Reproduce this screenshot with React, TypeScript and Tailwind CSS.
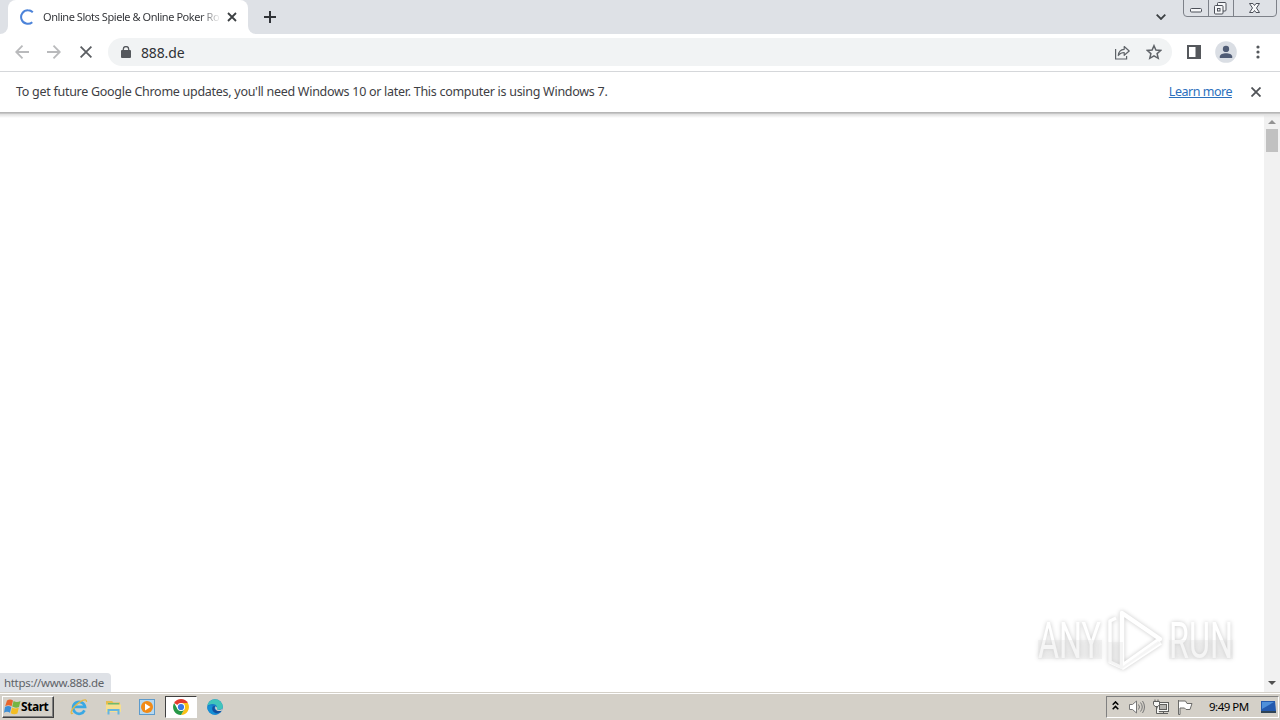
import React from 'react';
import type { ReactNode } from 'react';

const TabStrip: React.FC = () => (
  <header className="relative flex h-[34px] shrink-0 bg-[#dee1e6]">
    {/* Active tab */}
    <div className="h-full w-2 bg-white">
      <div className="h-full w-2 rounded-br-lg bg-[#dee1e6]"></div>
    </div>
    <div className="flex h-full w-60 items-center rounded-t-lg bg-white pl-3 pr-2.5">
      <svg className="h-4 w-4 shrink-0" viewBox="0 0 16 16" fill="none">
        <path d="M8 1.2A6.8 6.8 0 1 0 12.3 13.2M8 1.2A6.8 6.8 0 0 1 12.8 3.2" stroke="#4c83d9" strokeWidth="2" />
      </svg>
      <span className="ml-[7px] w-[178px] whitespace-nowrap bg-linear-to-r from-[#303236] from-88% to-transparent bg-clip-text text-[11px] leading-4 tracking-[-0.44px] text-transparent">
        Online Slots Spiele &amp; Online Poker Ro
      </span>
      <svg className="ml-[6px] h-2.5 w-2.5 shrink-0" viewBox="0 0 10 10" stroke="#3c4043" strokeWidth="1.8">
        <path d="M1 1l8 8M9 1l-8 8" />
      </svg>
    </div>
    <div className="h-full w-2 bg-white">
      <div className="h-full w-2 rounded-bl-lg bg-[#dee1e6]"></div>
    </div>
    <svg className="ml-2 mt-[11px] h-3 w-3" viewBox="0 0 12 12" stroke="#303338" strokeWidth="2">
      <path d="M6 0v12M0 6h12" />
    </svg>
    <svg className="ml-auto mr-[17px] mt-[14px] h-1.5 w-2.5" viewBox="0 0 10 6" fill="none" stroke="#3c4043" strokeWidth="1.8">
      <path d="M.7 .7L5 5l4.300-4.300" />
    </svg>
    {/* Window buttons */}
    <svg className="mr-[3px] h-[18px] w-[94px]" viewBox="0 0 94 18" fill="none" stroke="#7d8189">
      <path d="M.5 0v13q0 3.500 3.500 3.500h86q3.500 0 3.500-3.500V0M25.500 0v16.500M50.500 0v16.500" />
      <rect x="7.500" y="8.500" width="11" height="3.500" rx="1" fill="#f6f7f9" stroke="#4c5059" />
      <g fill="#f6f7f9" stroke="#4c5059">
        <rect x="34.500" y="2.500" width="8.500" height="8.500" rx="1" />
        <rect x="31.500" y="5.500" width="8.500" height="8.500" rx="1" />
        <rect x="34.500" y="8.500" width="2.500" height="2.500" />
        <path d="M66.500 3.500h3.500l1.500 2 1.500-2h3.500l-3 4.500 3 4.500H73l-1.500-2-1.500 2h-3.500l3-4.500z" />
      </g>
    </svg>
  </header>
);

const Toolbar: React.FC = () => (
  <div className="flex h-[38px] shrink-0 items-center border-b border-[#d5d7da] bg-white pb-px pl-[15px]">
    <svg className="h-3.5 w-3.5" viewBox="0 0 14 14" fill="none" stroke="#b9babc" strokeWidth="1.8">
      <path d="M14 7H1M7.500 .7L1.200 7l6.300 6.300" />
    </svg>
    <svg className="ml-[18px] h-3.5 w-3.5" viewBox="0 0 14 14" fill="none" stroke="#b9babc" strokeWidth="1.8">
      <path d="M0 7h13M6.500 .7L12.800 7l-6.300 6.300" />
    </svg>
    <svg className="ml-[19px] h-3 w-3" viewBox="0 0 12 12" stroke="#5b5e62" strokeWidth="1.8">
      <path d="M.6 .6l10.800 10.800M11.400 .6L.6 11.400" />
    </svg>
    <div className="ml-4 flex h-7 w-[1064px] items-center rounded-full bg-[#f1f3f4] pl-[13px] pr-[10px]">
      <svg className="h-3 w-[10px]" viewBox="0 0 10 12">
        <rect y="4" width="10" height="8" rx="1" fill="#55585d" />
        <path d="M2.300 5V3.200a2.700 2.700 0 0 1 5.400 0V5" fill="none" stroke="#55585d" strokeWidth="1.300" />
      </svg>
      <span className="ml-[10px] mt-0.5 text-[14px] leading-5 tracking-[-0.15px] text-[#303236]">888.de</span>
      {/* Share */}
      <svg className="ml-auto h-[15px] w-4" viewBox="0 0 16 15" fill="none" stroke="#5f6368" strokeWidth="1.200">
        <path d="M1.600 4v10h11v-3" />
        <path d="M4.300 10.500C4.600 6.500 7 4.500 10.200 4.300V1.500L15.200 6l-5 4.300V7.500C7.500 7.500 5.800 8.400 4.300 10.500z" strokeLinejoin="round" />
      </svg>
      <svg className="ml-4 h-4 w-4" viewBox="0 0 16 16" fill="none" stroke="#5f6368" strokeWidth="1.500">
        <path d="M8 1.700l1.900 4.400 4.800.4-3.600 3.100 1.100 4.700L8 11.800l-4.200 2.500 1.100-4.700L1.300 6.500l4.800-.4z" />
      </svg>
    </div>
    <svg className="ml-[15px] h-3.5 w-3.5" viewBox="0 0 14 14">
      <path d="M0 0h14v14H0zM2 2v10h6.500V2z" fill="#55585c" fillRule="evenodd" />
    </svg>
    <svg className="ml-[14px] h-[22px] w-[22px]" viewBox="0 0 23 23">
      <circle cx="11.500" cy="11.500" r="11.300" fill="#dadee4" />
      <circle cx="11.500" cy="8.300" r="3.300" fill="#505c75" />
      <path d="M5 17.800v-1.500c0-2.300 3.500-3.500 6.500-3.500s6.500 1.200 6.500 3.500v1.500z" fill="#505c75" />
    </svg>
    <svg className="ml-[19px] h-[14px] w-1" viewBox="0 0 4 14" fill="#55585c">
      <circle cx="2" cy="2" r="1.600" />
      <circle cx="2" cy="7" r="1.600" />
      <circle cx="2" cy="12" r="1.600" />
    </svg>
  </div>
);

const InfoBar: React.FC = () => (
  <div className="flex h-10 shrink-0 items-center bg-white pl-4 pr-[19px] text-[12.5px] leading-5 text-[#3e4044]">
    <span className="-mt-px whitespace-nowrap tracking-[-0.28px]">
      To get future Google Chrome updates, you'll need Windows 10 or later. This computer is using Windows 7.
    </span>
    <a href="#" className="-mt-px ml-auto whitespace-nowrap tracking-[-0.48px] text-[#2b70bd] underline">Learn more</a>
    <svg className="ml-[19px] h-2.5 w-2.5" viewBox="0 0 10 10" stroke="#505357" strokeWidth="1.8">
      <path d="M.5 .5l9 9M9.500 .5l-9 9" />
    </svg>
  </div>
);

const Watermark: React.FC = () => (
  <div className="absolute bottom-[19px] right-[42px] flex w-[208px] items-center justify-between px-2 drop-shadow-[0_0_2px_#c8c8c8]">
    <svg className="h-[66px] w-[194px] overflow-visible" viewBox="0 0 194 66" fill="none">
      <g fill="#ffffff" fontFamily="Roboto" fontSize="50" fontWeight="400">
        <text x="0" y="51" textLength="63" lengthAdjust="spacingAndGlyphs">ANY</text>
        <text x="131" y="51" textLength="64" lengthAdjust="spacingAndGlyphs">RUN</text>
      </g>
      <g stroke="#ffffff" strokeWidth="4.500" strokeLinejoin="round">
        <path d="M84 6l38 26-38 27z" />
        <path d="M78 11l-6 3v41l13 6 38-25" strokeWidth="3.500" />
      </g>
      <path d="M70 35h15v24l35-25 3 2-39 26-14-7zM0 33h64v19H0zM131 33h64v19h-64z" fill="#dddddd" opacity=".3" />
    </svg>
  </div>
);

const PageArea: React.FC = () => (
  <main className="relative flex min-h-0 flex-1 bg-white">
    <div className="flex-1"></div>
    {/* Scrollbar */}
    <div className="flex w-4 flex-col items-center bg-[#f1f1f1]">
      <svg className="mt-2 h-1 w-2" viewBox="0 0 8 4" fill="#929292">
        <path d="M0 4l4-4 4 4z" />
      </svg>
      <div className="mt-[5px] h-[23px] w-3 bg-[#c1c1c1]"></div>
      <svg className="mb-[7px] mt-auto h-1 w-2" viewBox="0 0 8 4" fill="#505050">
        <path d="M0 0l4 4 4-4z" />
      </svg>
    </div>
    <div className="absolute left-0 top-0 h-[6px] w-full border-t border-[#b6b6b6] bg-linear-to-b from-[#b8b8b8] via-[#e2e2e2] via-30% to-transparent"></div>
    <Watermark />
    <div className="absolute bottom-0 left-0 h-[19px] w-[111px] rounded-tr bg-[#dee1e6] pl-1 pt-[2px] text-[11.500px] leading-4 tracking-[-0.32px] text-[#5f6368]">
      https://www.888.de
    </div>
  </main>
);

const TaskItem: React.FC<{ active?: boolean; children: ReactNode }> = ({ active, children }) => (
  <div className={active
    ? 'flex h-[22px] w-8 items-center justify-center border border-b-white border-l-[#404040] border-r-white border-t-[#404040] bg-white'
    : 'flex h-[22px] w-8 items-center justify-center'}
  >
    {children}
  </div>
);

const Taskbar: React.FC = () => (
  <footer className="flex h-7 shrink-0 flex-col border-t border-[#d4d0c8] bg-[#d4d0c8]">
    <div className="flex h-[27px] items-center border-t border-white">
      <button className="ml-0.5 flex h-[22px] w-[52px] items-center border-b border-l border-r border-t border-b-[#404040] border-l-white border-r-[#404040] border-t-white pl-px text-[12px] font-bold leading-4 tracking-[-0.45px] text-black shadow-[inset_-1px_-1px_#808080]">
        <svg className="h-4 w-[17px] shrink-0" viewBox="0 0 17 16">
          <path d="M3 1.500Q6 -.5 9 1.500L7.600 7.300Q4.500 5.300 1.200 7.300z" fill="#e8652b" />
          <path d="M9.600 2Q12.800 4 16.500 2L15 8Q11.500 9.500 8.200 7.600z" fill="#75b543" />
          <path d="M1 8Q4.300 6.100 7.300 8L6 13.800Q3 11.900 0 13.800z" fill="#3d8fd6" />
          <path d="M8 8.400Q11 10.300 14.800 8.700L13.400 14.500Q10 16 6.700 14.200z" fill="#f3bd23" />
        </svg>
        Start
      </button>
      <div className="ml-[9px] flex gap-0.5">
        <TaskItem>
          <svg className="h-[18px] w-[18px]" viewBox="0 0 18 18" fill="none">
            <path d="M14.500 12.400A6 6 0 1 1 15 8.800H4" stroke="#39a8e4" strokeWidth="2.700" />
            <path d="M3 15C0 17 .5 12.500 5 8S17-1 16.500 4" stroke="#e3b846" strokeWidth="1.300" />
          </svg>
        </TaskItem>
        <TaskItem>
          <svg className="h-4 w-[17px]" viewBox="0 0 17 16">
            <path d="M1 2h6l1.500 1.500H15V13H1z" fill="#e5bd4f" />
            <path d="M3 4h11v3H3z" fill="#70b96c" />
            <path d="M1 5.500h15V13H1z" fill="#f5df91" />
            <path d="M3.500 15.500V11h10v4.500" fill="none" stroke="#65b5df" strokeWidth="2" />
          </svg>
        </TaskItem>
        <TaskItem>
          <svg className="h-4 w-4" viewBox="0 0 16 16">
            <rect x=".5" y=".5" width="15" height="15" fill="#b6d8f0" stroke="#5d9bcc" />
            <circle cx="8" cy="8" r="6" fill="#f18a16" />
            <path d="M6 4.500L11.500 8 6 11.500z" fill="#fff" />
          </svg>
        </TaskItem>
        <TaskItem active>
          <svg className="h-4 w-4" viewBox="0 0 16 16">
            <path d="M8 8L1.100 4A8 8 0 0 1 14.900 4z" fill="#e33b2e" />
            <path d="M8 8V4h6.900A8 8 0 0 1 8 16l3.500-6z" fill="#fbc116" />
            <path d="M8 8l3.500 2L8 16A8 8 0 0 1 1.100 4L4.500 10z" fill="#279847" />
            <circle cx="8" cy="8" r="4" fill="#fff" />
            <circle cx="8" cy="8" r="3.100" fill="#3978e6" />
          </svg>
        </TaskItem>
        <TaskItem>
          <svg className="h-4 w-4" viewBox="0 0 16 16">
            <circle cx="8" cy="8" r="7.800" fill="#177ac9" />
            <path d="M.3 7A7.800 7.800 0 0 1 15.800 7.500C16 10.500 12 11.500 9.700 10.200 11 8 9 5 6 5 3 5 1 6 .3 7z" fill="#40c5bb" />
            <path d="M5.500 7C3.500 10 6 14 10 15.500 5 16.500 1 13 .3 9 1 6 4 5.500 5.500 7z" fill="#1590d5" />
            <path d="M8 7.500C6 9.500 9 13 14.700 11.800 11 16 5 13.500 5.300 9.500 5.500 7.500 7 6.500 8 7.500z" fill="#134f9d" />
            <path d="M8.500 7.200Q11 9 9.700 10.200 12 12 15.600 9.800L14.800 11.800Q9 13 8 9z" fill="#d4d0c8" />
          </svg>
        </TaskItem>
      </div>
      {/* System tray */}
      <div className="ml-auto mr-px flex h-[22px] w-[173px] items-center border border-b-white border-l-[#808080] border-r-white border-t-[#808080] pl-[5px] pr-0.5">
        <svg className="-mt-1 h-[9px] w-[7px]" viewBox="0 0 7 9" fill="none" stroke="#000" strokeWidth="1.500">
          <path d="M.7 3.700l2.800-2.800 2.800 2.800M.7 8.200l2.800-2.800 2.800 2.800" />
        </svg>
        <svg className="ml-[10px] h-4 w-4" viewBox="0 0 16 16" fill="#fff" stroke="#777" strokeWidth="1">
          <path d="M.5 5.500h3L7.500 2v12l-4-3.500h-3z" />
          <path d="M9.500 5.500q2 2.500 0 5M11.500 3.500q3.500 4.500 0 9M13.500 2q4 6 0 12" fill="none" />
        </svg>
        <svg className="ml-2 h-4 w-4" viewBox="0 0 16 16" fill="#f7f7f5" stroke="#5f5f5d">
          <rect x="4.500" y="3.500" width="11" height="9" />
          <rect x="6.500" y="5.500" width="7" height="5" fill="#b5b4b0" />
          <path d="M6 14.500h9M10.500 12.500v2M3.500 6v8.500h3" />
          <path d="M.5 2.500h6v3l-1.500 2H2L.5 5.500zM2 2.500v-2M5 2.500v-2" />
        </svg>
        <svg className="ml-2 h-4 w-4" viewBox="0 0 16 16" fill="#fff" stroke="#6b6b69">
          <path d="M1.500 1v14.500h1.500V9h4.500l1.500 1.500h4l2-6H10L8.500 2H1.500" />
        </svg>
        <span className="ml-4 whitespace-nowrap text-[11.500px] leading-4 tracking-[-0.5px] text-black">9:49 PM</span>
        <svg className="ml-auto h-[14px] w-4" viewBox="0 0 16 14">
          <path d="M1 1h14l1 10H1z" fill="#245aae" />
          <path d="M2 2h12L2 9z" fill="#4f90da" />
          <path d="M1 11h15v2H1z" fill="#304455" />
        </svg>
      </div>
    </div>
  </footer>
);

export default function App() {
  return (
    <div className="flex h-screen w-screen flex-col overflow-hidden bg-white font-['Noto_Sans','Open_Sans',sans-serif]">
      <TabStrip />
      <Toolbar />
      <InfoBar />
      <PageArea />
      <Taskbar />
    </div>
  );
}
